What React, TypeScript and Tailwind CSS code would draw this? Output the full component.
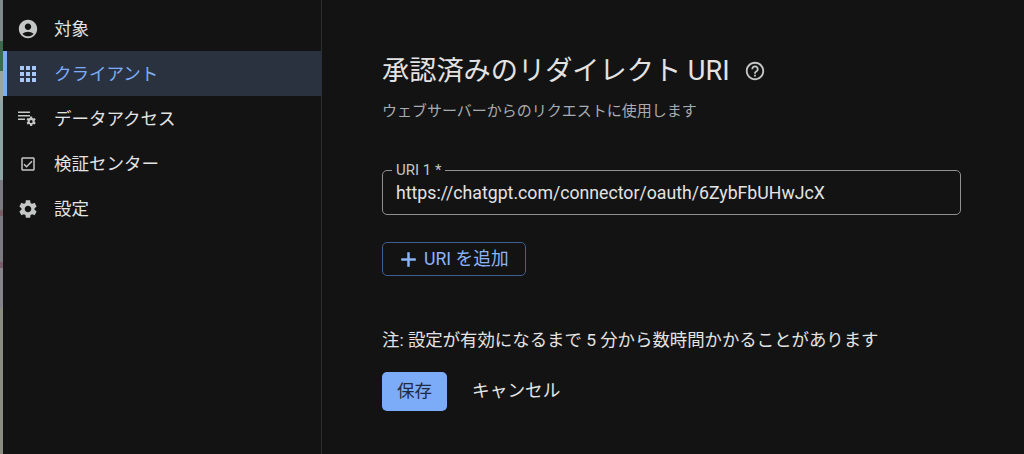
import { MdAccountCircle, MdApps, MdOutlineCheckBox, MdSettings, MdHelpOutline } from 'react-icons/md'
import { Plus } from 'lucide-react'

const font = 'font-["Roboto","Noto_Sans_CJK_JP",sans-serif]'

function DataAccessIcon() {
  return (
    <svg viewBox="0 0 20 20" className="h-[20px] w-[20px]" fill="currentColor">
      <path d="M0 2.5h12v1.4H0zM0 6h12v1.4H0zM0 9.5h7v1.4H0z" />
      <path d="M14.1 7.5l.3 1.4c.4.1.7.3 1 .55l1.35-.45.95 1.65-1.05.95a3.3 3.3 0 0 1 0 1.2l1.05.95-.95 1.65-1.35-.45c-.3.25-.6.45-1 .55l-.3 1.4h-1.9l-.3-1.4a3.2 3.2 0 0 1-1-.55l-1.35.45-.95-1.65 1.05-.95a3.3 3.3 0 0 1 0-1.2L8.6 10.6l.95-1.65 1.35.45c.3-.25.6-.45 1-.55l.3-1.4zm-.95 3.4a1.5 1.5 0 1 0 0 3 1.5 1.5 0 0 0 0-3z" />
    </svg>
  )
}

const items = [
  { label: '対象', icon: <MdAccountCircle size={22} /> },
  { label: 'クライアント', icon: <MdApps size={24} />, active: true },
  { label: 'データアクセス', icon: <DataAccessIcon /> },
  { label: '検証センター', icon: <MdOutlineCheckBox size={18} /> },
  { label: '設定', icon: <MdSettings size={22} /> },
]

export default function App() {
  return (
    <div className={`flex h-[454px] w-[1024px] overflow-hidden bg-[#131314] text-[#e3e3e3] ${font}`}>
      {/* sliver of the window behind */}
      <div className="flex w-[3px] shrink-0 flex-col">
        <div className="h-[41px] bg-[#7f8a88]" />
        <div className="h-[30px] bg-[#3a6b4f]" />
        <div className="h-[29px] bg-[#9aa59f]" />
        <div className="h-[80px] bg-[#8fa5a3]" />
        <div className="h-[30px] bg-[#7a7a80]" />
        <div className="h-[6px] bg-[#7a5f68]" />
        <div className="h-[46px] bg-[#7a7a80]" />
        <div className="h-[6px] bg-[#7a5f68]" />
        <div className="h-[40px] bg-[#85858a]" />
        <div className="flex-1 bg-[#8b8d80]" />
      </div>
      <aside className="flex w-[318px] shrink-0 flex-col pt-[6px]">
        {items.map((item) => (
          <div
            key={item.label}
            className={`flex h-[45px] items-center text-[17.5px] ${
              item.active
                ? 'border-l-[4px] border-[#7cacf8] bg-[#2a3240] text-[#7cacf8]'
                : 'border-l-[4px] border-transparent'
            }`}
          >
            <div className={`flex w-[47px] justify-center pr-[5px] ${item.active ? 'text-[#a8c7fa]' : 'text-[#c4c7c5]'}`}>
              {item.icon}
            </div>
            <span className="pt-[2px]">{item.label}</span>
          </div>
        ))}
      </aside>
      <div className="w-px shrink-0 bg-[#2e2f30]" />
      <main className="flex-1 pl-[60px] pt-[52px]">
        <div className="flex items-center gap-[14px]">
          <h1 className="text-[27.2px] font-normal leading-[38px] text-[#e3e3e3]">承認済みのリダイレクト URI</h1>
          <MdHelpOutline size={22} className="text-[#c4c7c5]" />
        </div>
        <p className="mt-[10px] text-[15px] leading-[22px] text-[#a8abaf]">ウェブサーバーからのリクエストに使用します</p>
        <div className="relative mt-[48px] flex h-[45px] w-[579px] items-center rounded-[5px] border border-[#8e918f] px-[13px] pt-[1px] text-[17.7px] text-[#e3e3e3]">
          <span className="absolute -top-[11px] left-[9px] bg-[#131314] px-[4px] text-[15px] leading-[20px] text-[#c4c7c5]">URI 1 *</span>
          https://chatgpt.com/connector/oauth/6ZybFbUHwJcX
        </div>
        <button className="mt-[27px] flex h-[34px] w-[144px] items-center rounded-[5px] border border-[#3f5f94] pl-[16px] text-[17.7px] text-[#8ab4f8]">
          <Plus size={25} strokeWidth={2.4} strokeLinecap="butt" className="mr-[3px] -ml-[3px]" />
          URI を追加
        </button>
        <p className="mt-[52px] text-[17.4px] leading-[24px] text-[#e3e3e3]">注: 設定が有効になるまで 5 分から数時間かかることがあります</p>
        <div className="mt-[20px] flex items-center">
          <button className="h-[39px] w-[65px] rounded-[5px] bg-[#7cacf8] text-[17.5px] text-[#1f2b40]">保存</button>
          <button className="ml-[25px] text-[17.7px] text-[#e3e3e3]">キャンセル</button>
        </div>
      </main>
    </div>
  )
}
